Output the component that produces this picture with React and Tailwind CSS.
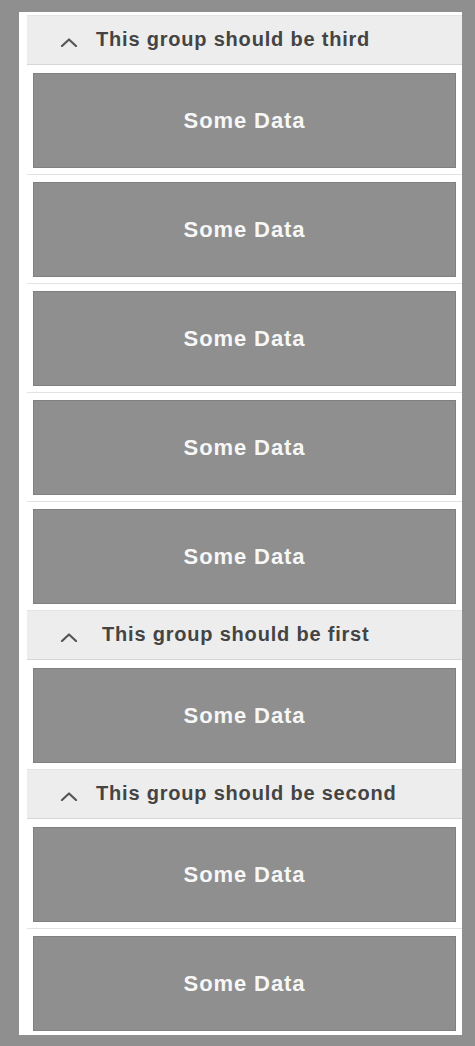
import React from "react";

const groups = [
  { title: "This group should be third", rows: 5, indent: false },
  { title: "This group should be first", rows: 1, indent: true },
  { title: "This group should be second", rows: 2, indent: false },
];

const Chevron = () => (
  <svg width="18" height="10" viewBox="0 0 18 10" className="mt-[4px] shrink-0">
    <polyline
      points="2,9 9,2.5 16,9"
      fill="none"
      stroke="#555555"
      strokeWidth="2.2"
      strokeLinecap="round"
      strokeLinejoin="round"
    />
  </svg>
);

const GroupHeader = ({ title, indent }) => (
  <div className="h-[50px] flex items-center pl-[33px] bg-[#ededed] border-t border-t-[#e4e4e4] border-b border-b-[#d6d6d6]">
    <Chevron />
    <span
      className={`${indent ? "ml-[24px]" : "ml-[18px]"} mb-[3px] text-[20px] font-bold tracking-[0.8px] text-[#444444]`}
    >
      {title}
    </span>
  </div>
);

const DataRow = ({ first, last }) => (
  <div
    className={`px-[6px] ${first ? "pt-[8px]" : "pt-[7px] border-t border-t-[#e2e2e2]"} ${last ? "pb-[4px]" : "pb-[6px]"}`}
  >
    <div className="h-[95px] flex items-center justify-center bg-[#8f8f8f] border border-[#808080]">
      <span className="text-[22px] font-bold tracking-[0.9px] text-[#f7f7f7]">Some Data</span>
    </div>
  </div>
);

export default function App() {
  return (
    <div
      className="min-h-screen bg-[#8f8f8f] pt-[12px] pb-[13px] pl-[19px] pr-[13px]"
      style={{ fontFamily: '"Liberation Sans", Arial, Helvetica, sans-serif' }}
    >
      <div className="bg-white pl-[8px] pt-[3px]">
        {groups.map((g, gi) => (
          <div key={g.title}>
            <GroupHeader title={g.title} indent={g.indent} />
            {Array.from({ length: g.rows }).map((_, i) => (
              <DataRow
                key={i}
                first={i === 0}
                last={gi === groups.length - 1 && i === g.rows - 1}
              />
            ))}
          </div>
        ))}
      </div>
    </div>
  );
}
